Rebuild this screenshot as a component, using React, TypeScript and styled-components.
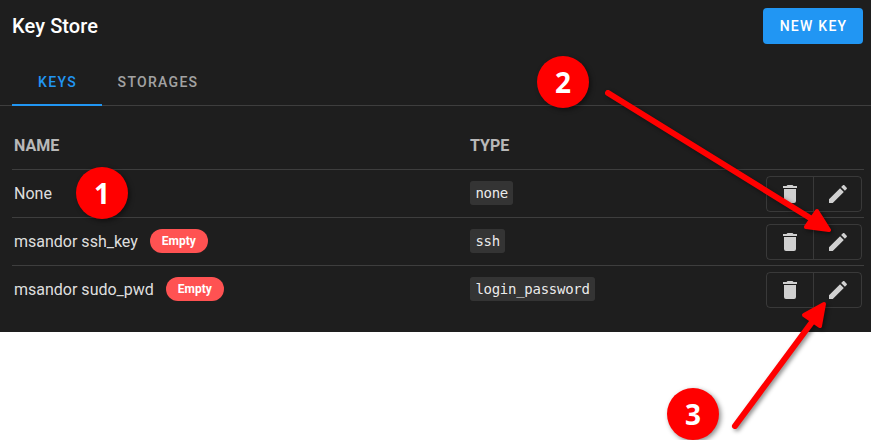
import React from "react";
import styled, { createGlobalStyle } from "styled-components";

const GlobalStyle = createGlobalStyle`
  html, body {
    margin: 0;
    padding: 0;
    background: #fff;
  }
  body {
    font-family: Roboto, "Liberation Sans", sans-serif;
  }
`;

const Screen = styled.div`
  position: relative;
  width: 871px;
  height: 440px;
  overflow: hidden;
`;

const Panel = styled.div`
  background: #1e1e1e;
  height: 332px;
  color: #fff;
`;

const Toolbar = styled.div`
  display: flex;
  align-items: center;
  justify-content: space-between;
  height: 52px;
  padding: 0 8px 0 12px;
`;

const Title = styled.h1`
  margin: 0;
  font-size: 20px;
  font-weight: 500;
  line-height: 1;
  letter-spacing: 0.1px;
`;

const NewKeyButton = styled.button`
  width: 100px;
  height: 36px;
  padding: 0 0 0 1px;
  border: 0;
  border-radius: 4px;
  background: #2196f3;
  color: #fff;
  font: 500 14px Roboto, sans-serif;
  letter-spacing: 1.25px;
`;

const Tabs = styled.div`
  display: flex;
  height: 48px;
  margin-top: 5px;
  padding-left: 12px;
  border-bottom: 1px solid #3e3e3e;
`;

const Tab = styled.div<{ $active?: boolean; $width: number }>`
  display: flex;
  align-items: center;
  justify-content: center;
  box-sizing: border-box;
  width: ${(p) => p.$width}px;
  height: 49px;
  padding: 2px 0 0 1px;
  font-size: 14px;
  font-weight: 500;
  letter-spacing: 1.3px;
  color: ${(p) => (p.$active ? "#2196f3" : "rgba(255, 255, 255, 0.6)")};
  border-bottom: 2px solid ${(p) => (p.$active ? "#2196f3" : "transparent")};
`;

const KeyTable = styled.table`
  width: 852px;
  margin: 15px 0 0 12px;
  border-collapse: collapse;
  table-layout: fixed;
`;

const HeadCell = styled.th<{ $width?: number }>`
  height: 48px;
  padding: 2px 2px 0;
  box-sizing: border-box;
  width: ${(p) => (p.$width ? `${p.$width}px` : "auto")};
  text-align: left;
  font-size: 16px;
  font-weight: 700;
  color: rgba(255, 255, 255, 0.7);
  border-bottom: 1px solid #3e3e3e;
`;

const Row = styled.tr`
  &:not(:last-child) td {
    border-bottom: 1px solid #3e3e3e;
  }
`;

const Cell = styled.td`
  height: 48px;
  padding: 0 2px;
  box-sizing: border-box;
  font-size: 14px;
  color: #fff;
`;

const NameLine = styled.div`
  display: flex;
  align-items: center;
  gap: 12px;
`;

const KeyName = styled.span`
  font-size: 16px;
  color: rgba(255, 255, 255, 0.87);
`;

const EmptyChip = styled.span`
  display: inline-flex;
  align-items: center;
  height: 24px;
  padding: 0 12px;
  border-radius: 12px;
  background: #ff5252;
  color: #fff;
  font-size: 12px;
  font-weight: 700;
`;

const TypeCode = styled.code`
  padding: 4px 5.4px;
  border-radius: 3px;
  background: rgba(255, 255, 255, 0.1);
  color: rgba(255, 255, 255, 0.92);
  font-family: "DejaVu Sans Mono", monospace;
  font-size: 14px;
  letter-spacing: -0.27px;
`;

const ActionsCell = styled(Cell)`
  text-align: right;
  padding: 1px 2px 0 0;
`;

const ButtonGroup = styled.div`
  display: inline-flex;
  box-sizing: border-box;
  width: 96px;
  vertical-align: middle;
  border: 1px solid rgba(255, 255, 255, 0.12);
  border-radius: 4px;
`;

const IconButton = styled.button`
  display: flex;
  align-items: center;
  justify-content: center;
  box-sizing: border-box;
  width: 46px;
  height: 34px;
  padding: 0;
  border: 0;
  background: transparent;
  color: #d0d0d0;

  & + & {
    width: 48px;
    border-left: 1px solid rgba(255, 255, 255, 0.12);
  }
`;

const Marker = styled.div<{ $x: number; $y: number }>`
  position: absolute;
  left: ${(p) => p.$x}px;
  top: ${(p) => p.$y}px;
  display: flex;
  align-items: center;
  justify-content: center;
  width: 52px;
  height: 52px;
  border-radius: 50%;
  background: #ff0000;
  color: #fff;
  font-family: "Open Sans", sans-serif;
  font-size: 28px;
  font-weight: 700;
  box-shadow: 2px 2px 5px rgba(0, 0, 0, 0.45);
`;

const ArrowLayer = styled.svg`
  position: absolute;
  left: 0;
  top: 0;
  filter: drop-shadow(2px 2px 2px rgba(0, 0, 0, 0.45));
`;

const TrashIcon = () => (
  <svg width="24" height="24" viewBox="0 0 24 24" fill="currentColor">
    <path d="M19,4H15.5L14.5,3H9.5L8.5,4H5V6H19M6,19A2,2 0 0,0 8,21H16A2,2 0 0,0 18,19V7H6V19Z" />
  </svg>
);

const PencilIcon = () => (
  <svg width="24" height="24" viewBox="0 0 24 24" fill="currentColor">
    <path d="M20.71,7.04C21.1,6.65 21.1,6 20.71,5.63L18.37,3.29C18,2.9 17.35,2.9 16.96,3.29L15.12,5.12L18.87,8.87M3,17.25V21H6.75L17.81,9.93L14.06,6.18L3,17.25Z" />
  </svg>
);

const keys = [
  { name: "None", type: "none", empty: false },
  { name: "msandor ssh_key", type: "ssh", empty: true },
  { name: "msandor sudo_pwd", type: "login_password", empty: true },
];

const App: React.FC = () => {
  return (
    <Screen>
      <GlobalStyle />
      <Panel>
        <Toolbar>
          <Title>Key Store</Title>
          <NewKeyButton>NEW KEY</NewKeyButton>
        </Toolbar>
        <Tabs>
          <Tab $active $width={90}>KEYS</Tab>
          <Tab $width={111}>STORAGES</Tab>
        </Tabs>
        <KeyTable>
          <thead>
            <tr>
              <HeadCell $width={456}>NAME</HeadCell>
              <HeadCell $width={200}>TYPE</HeadCell>
              <HeadCell />
            </tr>
          </thead>
          <tbody>
            {keys.map((key) => (
              <Row key={key.name}>
                <Cell>
                  <NameLine>
                    <KeyName>{key.name}</KeyName>
                    {key.empty && <EmptyChip>Empty</EmptyChip>}
                  </NameLine>
                </Cell>
                <Cell>
                  <TypeCode>{key.type}</TypeCode>
                </Cell>
                <ActionsCell>
                  <ButtonGroup>
                    <IconButton><TrashIcon /></IconButton>
                    <IconButton><PencilIcon /></IconButton>
                  </ButtonGroup>
                </ActionsCell>
              </Row>
            ))}
          </tbody>
        </KeyTable>
      </Panel>

      <ArrowLayer width="871" height="440" viewBox="0 0 871 440">
        <line x1="608" y1="93" x2="815" y2="221" stroke="#ff0000" strokeWidth="6" strokeLinecap="round" />
        <path d="M829 230 L806 227 L817 211 Z" fill="#ff0000" stroke="#ff0000" strokeWidth="4" strokeLinejoin="round" />
        <line x1="735" y1="426" x2="815" y2="318" stroke="#ff0000" strokeWidth="6" strokeLinecap="round" />
        <path d="M824 304 L804 315 L820 326 Z" fill="#ff0000" stroke="#ff0000" strokeWidth="4" strokeLinejoin="round" />
      </ArrowLayer>

      <Marker $x={76} $y={167}>1</Marker>
      <Marker $x={537} $y={56}>2</Marker>
      <Marker $x={667} $y={388}>3</Marker>
    </Screen>
  );
};

export default App;
